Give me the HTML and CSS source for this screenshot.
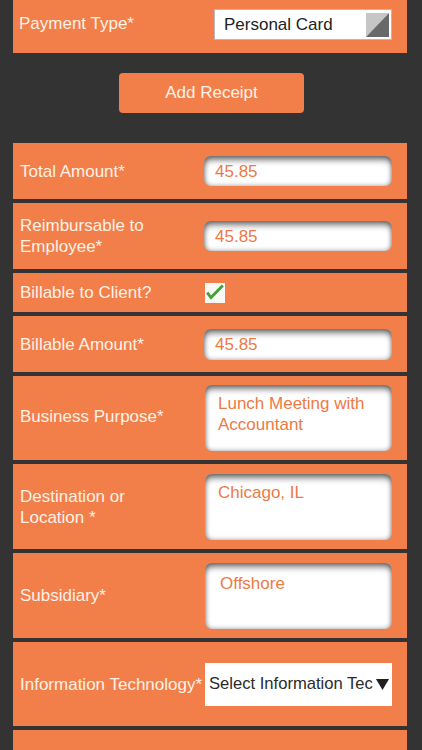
FILE: index.html
```html
<!DOCTYPE html>
<html lang="en">
<head>
<meta charset="utf-8">
<title>Expense Receipt</title>
<link rel="stylesheet" href="styles.css">
</head>
<body>
<main class="form">
  <section class="row row--top">
    <div class="row__label">Payment Type*</div>
    <div class="picker">
      <span class="picker__text">Personal Card</span>
      <svg class="picker__icon" width="25" height="26" viewBox="0 0 25 26">
        <rect x="0" y="0" width="25" height="26" fill="#ffffff"/>
        <polygon points="1,1 24,1 1,25" fill="#c6c6c6"/>
        <polygon points="24,1 24,25 1,25" fill="#696969"/>
      </svg>
    </div>
  </section>

  <div class="actions">
    <button class="btn" type="button">Add Receipt</button>
  </div>

  <div class="rows">
    <section class="row row--h56">
      <div class="row__label">Total Amount*</div>
      <div class="field">45.85</div>
    </section>
    <section class="row row--h66">
      <div class="row__label">Reimbursable to<br>Employee*</div>
      <div class="field">45.85</div>
    </section>
    <section class="row row--h39">
      <div class="row__label">Billable to Client?</div>
      <div class="check">
        <svg width="20" height="20" viewBox="0 0 20 20">
          <path d="M2.2 9.6 L6 14.6 L17.8 2.6" fill="none" stroke="#43a23b" stroke-width="2.8" stroke-linejoin="miter"/>
        </svg>
      </div>
    </section>
    <section class="row row--h56">
      <div class="row__label">Billable Amount*</div>
      <div class="field field--tall">45.85</div>
    </section>
    <section class="row row--h84">
      <div class="row__label row__label--up">Business Purpose*</div>
      <div class="field field--area">Lunch Meeting with<br>Accountant</div>
    </section>
    <section class="row row--h85">
      <div class="row__label">Destination or<br>Location *</div>
      <div class="field field--area">Chicago, IL</div>
    </section>
    <section class="row row--h85">
      <div class="row__label">Subsidiary*</div>
      <div class="field field--area field--indent">Offshore</div>
    </section>
    <section class="row row--h84">
      <div class="row__label">Information Technology*</div>
      <div class="select">
        <span class="select__text">Select Information Tec</span>
        <svg class="select__arrow" width="13" height="12" viewBox="0 0 13 12">
          <polygon points="0,1 13,1 6.5,12" fill="#1f1f1f"/>
        </svg>
      </div>
    </section>
    <section class="row row--h40"></section>
  </div>
</main>
</body>
</html>
```

FILE: styles.css
```css
* {
  box-sizing: border-box;
}

html, body {
  margin: 0;
  padding: 0;
  background: #333333;
  height: 100%;
  overflow: hidden;
}

body {
  font-family: "Liberation Sans", Arial, Helvetica, sans-serif;
}

.form {
  width: 394px;
  margin-left: 13px;
}

.row {
  display: flex;
  align-items: center;
  background: #f27f49;
  padding: 0 15px 0 7px;
}

.row--top { height: 53px; padding-left: 6px; }
.row--h39 { height: 39px; }
.row--h40 { height: 40px; }
.row--h56 { height: 56px; }
.row--h66 { height: 66px; }
.row--h84 { height: 84px; }
.row--h85 { height: 85px; }

.row__label {
  width: 184px;
  flex: none;
  color: #fdf1e8;
  font-size: 17px;
  line-height: 21px;
  white-space: nowrap;
}

.row__label--up {
  margin-top: -4px;
}

.row--top .row__label {
  width: 195px;
  margin-top: -6px;
}

.picker {
  width: 178px;
  height: 31px;
  margin-top: -4px;
  background: #ffffff;
  border: 1px solid #b9b9b9;
  display: flex;
  align-items: center;
  padding: 0 1px 0 9px;
}

.picker__text {
  flex: 1;
  color: #222222;
  font-size: 17px;
}

.picker__icon {
  display: block;
  flex: none;
}

.actions {
  display: flex;
  justify-content: center;
  padding: 20px 0 30px 3px;
}

.btn {
  width: 185px;
  height: 40px;
  border: none;
  border-radius: 4px;
  background: #f27f49;
  color: #fdf1e8;
  font-family: inherit;
  font-size: 17px;
  padding: 0;
}

.rows {
  display: flex;
  flex-direction: column;
  gap: 4px;
}

.field {
  width: 188px;
  height: 30px;
  background: #ffffff;
  border-radius: 7px;
  color: #ec7a45;
  font-size: 17px;
  line-height: 21px;
  padding: 5px 11px;
  box-shadow:
    inset 0 5px 6px -1px rgba(0, 0, 0, 0.5),
    inset 0 0 5px rgba(0, 0, 0, 0.4);
}

.field--tall {
  height: 31px;
}

.field--area {
  width: 188px;
  height: 66px;
  margin-left: 1px;
  padding: 8px 13px;
}

.field--indent {
  padding-left: 15px;
  padding-top: 10px;
}

.check {
  width: 20px;
  height: 20px;
  margin-left: 1px;
  background: #f8f8f4;
}

.check svg {
  display: block;
}

.select {
  width: 188px;
  height: 43px;
  margin-left: 1px;
  background: #ffffff;
  display: flex;
  align-items: center;
  padding: 0 3px 0 4px;
  color: #2b2b2b;
  font-size: 16.6px;
}

.select__text {
  flex: 1;
  white-space: nowrap;
  overflow: hidden;
}

.select__arrow {
  display: block;
  flex: none;
}
```
